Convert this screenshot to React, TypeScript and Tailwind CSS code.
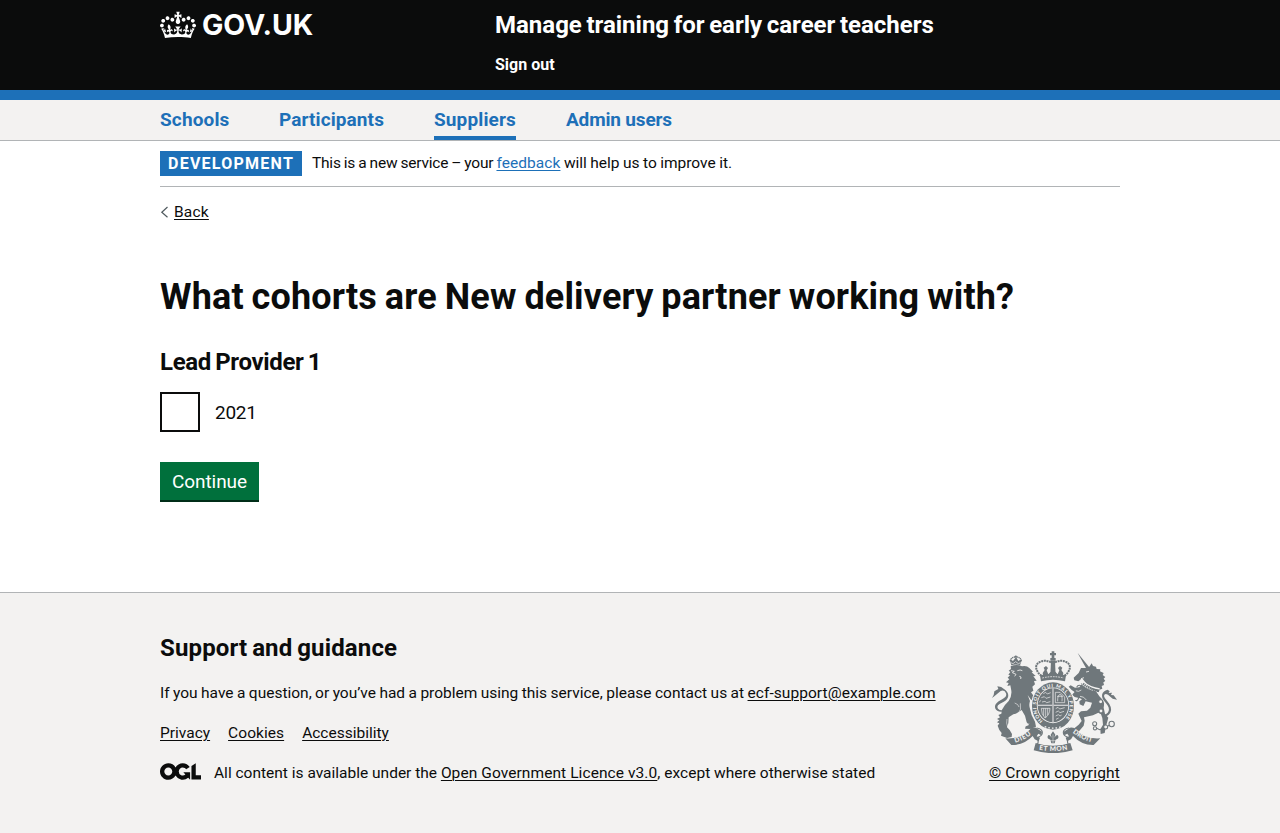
import type { ReactNode } from "react";

const link = "underline decoration-1 underline-offset-[2px]";

function Crown() {
  return (
    <svg className="h-[30px] w-[36px] shrink-0" viewBox="0 0 132 97" fill="currentColor" aria-hidden="true">
      <path
        fillRule="evenodd"
        d="M25 30.2c3.5 1.5 7.7-.2 9.1-3.7 1.5-3.6-.2-7.8-3.9-9.2-3.6-1.4-7.6.3-9.1 3.9-1.4 3.5.3 7.5 3.9 9zM9 39.5c3.6 1.5 7.8-.2 9.2-3.7 1.5-3.6-.2-7.8-3.9-9.1-3.6-1.5-7.6.2-9.1 3.8-1.4 3.5.3 7.5 3.8 9zM4.4 57.2c3.5 1.5 7.7-.2 9.1-3.8 1.5-3.6-.2-7.7-3.9-9.1-3.5-1.5-7.6.3-9.1 3.8-1.4 3.5.3 7.6 3.9 9.1zm38.3-21.4c3.5 1.5 7.7-.2 9.1-3.8 1.5-3.6-.2-7.7-3.9-9.1-3.6-1.5-7.6.3-9.1 3.8-1.3 3.6.4 7.7 3.9 9.1zm64.4-5.6c-3.6 1.5-7.8-.2-9.1-3.7-1.5-3.6.2-7.8 3.8-9.2 3.6-1.4 7.7.3 9.2 3.9 1.3 3.5-.4 7.5-3.9 9zm15.9 9.3c-3.6 1.5-7.7-.2-9.1-3.7-1.5-3.6.2-7.8 3.7-9.1 3.6-1.5 7.7.2 9.2 3.8 1.5 3.5-.3 7.5-3.8 9zm4.7 17.7c-3.6 1.5-7.8-.2-9.2-3.8-1.5-3.6.2-7.7 3.9-9.1 3.6-1.5 7.7.3 9.2 3.8 1.3 3.5-.4 7.6-3.9 9.1zM89.3 35.8c-3.6 1.5-7.8-.2-9.2-3.8-1.4-3.6.2-7.7 3.9-9.1 3.6-1.5 7.7.3 9.2 3.8 1.4 3.6-.3 7.7-3.9 9.1zM69.7 17.7l8.9 4.7V9.3l-8.9 2.8c-.2-.3-.5-.6-.9-.9L72.4 0H59.6l3.5 11.2c-.3.3-.6.5-.9.9l-8.8-2.8v13.1l8.8-4.7c.3.3.6.7.9.9l-5 15.4v.1c-.2.8-.4 1.6-.4 2.4 0 4.1 3.1 7.5 7 8.1h.2c.3 0 .7.1 1 .1.4 0 .7 0 1-.1h.2c4-.6 7.1-4.1 7.1-8.1 0-.8-.1-1.7-.4-2.4V34l-5.1-15.4c.4-.2.7-.6 1-.9zM66 92.8c16.9 0 32.8 1.1 47.1 3.2 4-16.9 8.9-26.7 14-33.5l-9.6-3.4c1 4.9 1.1 7.2 0 10.2-1.5-1.4-3-4.3-4.2-8.7L108.6 76c2.8-2 5-3.2 7.5-3.3-4.4 9.4-10 11.9-13.6 11.2-4.3-.8-6.3-4.6-5.6-7.9 1-4.7 5.7-5.9 8-.5 4.3-8.7-3-11.4-7.6-8.8 7.1-7.2 7.9-13.5 2.1-21.1-8 6.1-8.1 12.3-4.5 20.8-4.7-5.4-12.1-2.5-9.5 6.2 3.4-5.2 7.9-2 7.2 3.1-.6 4.3-6.4 7.8-13.5 7.2-10.3-.9-10.9-8-11.2-13.8 2.5-.5 7.1 1.8 11 7.3L80.2 60c-4.1 4.4-8 5.3-12.3 5.4 1.4-4.4 8-11.6 8-11.6H55.5s6.4 7.2 7.9 11.6c-4.2-.1-8-1-12.3-5.4l1.4 16.4c3.9-5.5 8.5-7.7 10.9-7.3-.3 5.8-.9 12.8-11.1 13.8-7.2.6-12.9-2.9-13.5-7.2-.7-5 3.8-8.3 7.1-3.1 2.7-8.7-4.6-11.6-9.4-6.2 3.7-8.5 3.6-14.7-4.6-20.8-5.8 7.6-5 13.9 2.2 21.1-4.7-2.6-11.9.1-7.7 8.8 2.3-5.5 7.1-4.2 8.1.5.7 3.3-1.3 7.1-5.7 7.9-3.5.7-9-1.8-13.5-11.2 2.5.1 4.7 1.3 7.5 3.3l-4.7-15.4c-1.2 4.4-2.7 7.2-4.3 8.7-1.1-3-.9-5.3 0-10.2l-9.5 3.4c5 6.9 9.9 16.7 14 33.5 14.8-2.1 30.8-3.2 47.7-3.2z"
      />
    </svg>
  );
}

function OglLogo() {
  return (
    <svg className="h-[17px] w-[41px] shrink-0" viewBox="0 0 483.2 195.7" fill="currentColor" aria-hidden="true">
      <path d="M421.5 142.8V.1l-50.7 32.3v161.1h112.4v-50.7zm-122.3-9.6A47.12 47.12 0 0 1 221 97.8c0-26 21.1-47.1 47.1-47.1 16.7 0 31.4 8.7 39.7 21.8l42.7-27.2A97.63 97.63 0 0 0 268.1 0c-36.5 0-68.3 20.1-85.1 49.7A98 98 0 0 0 97.8 0C43.9 0 0 43.9 0 97.8s43.9 97.8 97.8 97.8c36.5 0 68.3-20.1 85.1-49.7a97.76 97.76 0 0 0 149.6 25.4l19.4 22.2h3v-87.8h-80l24.3 27.5zM97.8 145c-26 0-47.1-21.1-47.1-47.1s21.1-47.1 47.1-47.1 47.1 21.1 47.1 47.1S123.8 145 97.8 145" />
    </svg>
  );
}

function Crest() {
  return (
    <svg
      className="h-[102px] w-[125px]"
      viewBox="36 33 375 306"
      fill="#6f777b"
      stroke="#6f777b"
      strokeWidth="0"
      aria-hidden="true"
      fontFamily="Lato, sans-serif"
    >
      <defs>
        <path id="garter" d="M192 245A50.5 56 0 1 1 246 245" />
        <path id="dieu" d="M106 308Q136 300 160 278" />
        <path id="etmon" d="M174 329Q219 338 266 328" />
        <path id="droit" d="M276 277Q305 300 341 308" />
      </defs>

      {/* Royal crown */}
      <path d="M215 34h8v5h5v7h-5v8h4v8h-16v-8h4v-8h-5v-7h5z" />
      <path d="M213 62h12l2 45h-16z" />
      <path
        d="M213 67C190 55 164 68 169 86Q172 98 184 107M225 67C248 55 274 68 269 86Q266 98 254 107"
        fill="none"
        strokeWidth="6"
        strokeDasharray="6 2"
      />
      <path d="M188 99l6-9-3-7 7-5 6 6-4 7 5 12 7-8 7 11 7-11 7 8 5-12-4-7 6-6 7 5-3 7 6 9-2 10h-58z" />
      <path d="M180 106q39-10 78 0l-3 18q-36-9-72 0z" />
      <path d="M187 114q32-8 64 0" fill="none" stroke="#f3f2f1" strokeWidth="2.5" strokeDasharray="5 3" />

      {/* Lion */}
      <path d="M90 62l3-3 6 4 7-9h4l5 9 6-4 4 3-5 14q-14-5-26 0z" />
      <path d="M92 68l7 3 8-6 8 6 7-3" stroke="#f3f2f1" strokeWidth="2" fill="none" />
      <path d="M91 63q2-12 15-12M124 63q-2-12-15-12" fill="none" strokeWidth="4" strokeDasharray="4 1.5" />
      <circle cx="107.500" cy="50" r="3.500" />
      <path d="M92 79q18-8 34 0 14-3 22 5l11 11-4 2 12 11-7 1 10 13-8 1 3 10-8 7 3 12-7 5 10 14q8-5 13 0l9 7-3 9 5 10-12-2-9-9-13-7-10-14 7 18q-4 13 0 23l5 20 10 19 3 15-17 7-16-1 2-7 10-4-7-8-5-20-10-17q-13 10-25 13l-14 9-1 17-4 13 8 8 7 12-1 9-14 3-18-7 2-8-7-9-5-13 5-7-7-3 7-6-7-4 9-5-5-7 9-4 2-12q7-14 20-26 10-15 8-31l-3-16-9 2 4-9-8-2 10-9-5-5 7-7-5-2 6-8-5-4 7-5z" />
      <path d="M93 92l10 2-6 4 11 5-4 6M112 92q9-4 15 0M118 109l5 2-1 6" fill="none" stroke="#f3f2f1" strokeWidth="2.5" />
      <path d="M121 190q5 18-8 34M104 189q11 3 13 12M81 237q-3 12 2 24M147 250l-9 9" fill="none" stroke="#f3f2f1" strokeWidth="1.8" />
      <path d="M75 213C48 222 37 199 51 188 64 177 83 174 78 160Q74 148 62 153L43 169 36 174Q43 164 43 154L55 147 52 139Q65 139 72 147C90 159 89 177 70 186Q46 196 54 206 64 216 77 206z" />

      {/* Unicorn */}
      <path d="M293 39l36 44-9 5z" />
      <path d="M324 84l5-5 6-9 4 8 9 2 2 7 11 1-1 6 11 5-3 6 8 6-5 5 5 7-6 4 2 8-7 3 2 8-8 3-3 8q-16-5-33-18l-7-12-6-8q-5-7-9 0l-6 5-12-3-2-8 15-14 7-15z" />
      <path d="M318 96l9-2M303 116l9-3" stroke="#f3f2f1" strokeWidth="2.5" />
      <path d="M312 127q18 16 47 20" fill="none" stroke="#f3f2f1" strokeWidth="4" />
      <path d="M309 131q20 18 48 22" fill="none" strokeWidth="7" strokeDasharray="4 2" />
      <path d="M307 130l-9 12-13 1-13-7-6 4 9 10 9 6-8 8 8 7 16 4 6 3-8 6 1 9 11 5 7-14 19 4-5 15-10 9-18 2-8 7 10 22-9 11-12 10-5 12 18-2 14-17 3-15-2-10 27-6 16-8 8 5 4 11 2 20-8 14 1 14 12-3 4-20 7-26-10-12-4-18q4-18-6-27l-7-7-10-15q-24-3-46-23z" />
      <path d="M286 152q10 5 18-2M300 169q12 0 19 11" fill="none" stroke="#f3f2f1" strokeWidth="2.200" />
      <g fill="none" strokeWidth="3.2">
        <path d="M286 148q-3 8 4 14 9 6 5 14t-9 5M303 137q-9-4-13 5" />
        <circle cx="362" cy="185" r="6" fill="#f3f2f1" />
        <circle cx="363" cy="213" r="6" fill="#f3f2f1" />
        <circle cx="344" cy="251" r="6" fill="#f3f2f1" />
        <circle cx="345" cy="265" r="5" fill="#f3f2f1" />
        <circle cx="377" cy="261" r="6" fill="#f3f2f1" />
        <circle cx="395" cy="252" r="8" fill="#f3f2f1" />
        <path d="M350 265l9 4 13-5M384 258l4-2" />
      </g>
      <path d="M371 226C394 217 389 201 375 186 360 169 365 153 383 149L389 154 386 159 396 158 393 165 401 166 411 179 398 176 384 164Q373 158 372 168 373 175 382 184 399 204 391 218 382 231 369 231z" />

      {/* Garter and shield */}
      <ellipse cx="219" cy="198" rx="66" ry="74" fill="#f3f2f1" />
      <ellipse cx="219" cy="198" rx="63" ry="71" />
      <ellipse cx="219" cy="196" rx="48.5" ry="53.5" fill="#f3f2f1" />
      <ellipse cx="219" cy="196" rx="46" ry="51" />
      <path d="M219 145v102M173 196h92" stroke="#f3f2f1" strokeWidth="3.500" />
      <path d="M219 145v102M173 196h92" strokeWidth="1" />
      <g fill="none" stroke="#f3f2f1" strokeWidth="2">
        <path d="M190 161l7-4 5 5 10-4M184 173l9-3 5 5 13-4M186 186l9-2 5 4 11-3M178 187l4-6" />
        <path d="M226 157h14l14 14v17h-28zM233 184q-1-18 7-21 8 3 6 21M231 169l18 0" />
        <path d="M184 205h26q-1 20-15 29-11-11-11-29M191 205v22M197 205v27M203 205v20" />
        <path d="M227 206l7-4 5 5 15-4M227 217l8-4 5 5 12-4M227 228l8-4 5 4 5-3M228 238l8-4" />
      </g>
      <g fill="#f3f2f1" fontSize="14.5" fontWeight="900">
        <text>
          <textPath href="#garter" startOffset="4" textLength="258" lengthAdjust="spacing">
            HONI SOIT QUI MAL Y PENSE
          </textPath>
        </text>
      </g>
      <path d="M194 260q25 9 50 0" fill="none" stroke="#f3f2f1" strokeWidth="4" strokeDasharray="5 6" />

      {/* Ribbon */}
      <path d="M76 295q48 4 78-31 12-4 19 3l13 8-2 11-9-5-5 8 10 4-4 11-12-6-6-10q-26 28-64 27z" />
      <path d="M361 295q-48 4-78-31-12-4-19 3l-13 8 2 11 9-5 5 8-10 4 4 11 12-6 6-10q26 28 62 27z" />
      <path d="M170 264q18 3 17 15-1 8-13 13 2 20-3 20M267 264q-18 3-17 15 1 8 13 13-2 20 3 20" fill="none" strokeWidth="3.5" />
      <path d="M167 309q52 17 104 0l7 22q-58 17-117 0z" />
      <path d="M219 274l7 10-3 9q8-13 12-4 2 8-8 10l-3 11h-10l-3-11q-10-2-8-10 4-9 12 4l-3-9z" />
      <path d="M219 283v26M208 302h22" stroke="#f3f2f1" strokeWidth="1.500" />
      <g fill="#f3f2f1" fontSize="20" fontWeight="900">
        <text><textPath href="#dieu" textLength="54">DIEU</textPath></text>
        <text><textPath href="#etmon" startOffset="3" textLength="86">ET MON</textPath></text>
        <text><textPath href="#droit" startOffset="2" textLength="64">DROIT</textPath></text>
      </g>
    </svg>
  );
}

function Container({ className = "", children }: { className?: string; children: ReactNode }) {
  return <div className={`mx-auto w-[960px] ${className}`}>{children}</div>;
}

const navItems = [
  { label: "Schools", style: "w-[69px] tracking-[0.14px] border-transparent" },
  { label: "Participants", style: "w-[105px] tracking-[0.1px] border-transparent" },
  { label: "Suppliers", style: "w-[82px] tracking-[0.13px] border-[#1d70b8]" },
  { label: "Admin users", style: "w-[106px] tracking-[-0.16px] border-transparent" },
];

export default function App() {
  return (
    <div className="flex min-h-screen flex-col bg-white font-['Roboto',sans-serif] text-[15.5px] leading-5 text-[#0b0c0c]">
      <header className="h-[100px] border-b-[10px] border-[#1d70b8] bg-[#0b0c0c] text-white">
        <Container className="flex">
          <a href="#" className="flex w-[335px] items-start gap-[6px] pt-[10px]">
            <Crown />
            <span className="font-['Inter'] text-[28.5px] leading-[30px] font-bold tracking-[-0.05px]">GOV.UK</span>
          </a>
          <div className="pt-[10px]">
            <div className="text-[24px] leading-[30px] font-bold [word-spacing:-1.4px]">
              Manage training for early career teachers
            </div>
            <a href="#" className="mt-[15px] block text-[16px] leading-5 font-bold">
              Sign out
            </a>
          </div>
        </Container>
      </header>

      <nav className="h-[41px] border-b border-[#b1b4b6] bg-[#f3f2f1]">
        <Container className="flex gap-[50px]">
          {navItems.map((item) => (
            <a
              key={item.label}
              href="#"
              className={`h-10 border-b-4 text-[19px] leading-10 font-bold whitespace-nowrap text-[#1d70b8] ${item.style}`}
            >
              {item.label}
            </a>
          ))}
        </Container>
      </nav>

      <Container>
        <div className="flex h-[46px] items-start border-b border-[#b1b4b6] pt-[10px]">
          <strong className="h-[25px] w-[142px] bg-[#1d70b8] pl-2 text-[16px] leading-[25px] font-bold tracking-[1.25px] text-white">
            DEVELOPMENT
          </strong>
          <p className="ml-[10px] leading-[25px] whitespace-pre">
            <span className="tracking-[-0.22px] [word-spacing:-0.5px]">This is a new service – your </span>
            <a href="#" className={`tracking-[0.06px] text-[#1d70b8] ${link}`}>feedback</a>
            <span className="[word-spacing:-0.4px]"> will help us to improve it.</span>
          </p>
        </div>
        <a href="#" className="mt-[15px] flex h-5 items-center">
          <svg className="mr-[5px] h-3 w-[9px]" viewBox="0 0 9 12" fill="none" stroke="#505a5f" strokeWidth="1.2">
            <path d="M7.5 1L1.8 6.2l5.7 5" />
          </svg>
          <span className={`tracking-[0.2px] ${link}`}>Back</span>
        </a>
      </Container>

      <Container className="pt-[55px]">
        <h1 className="text-[36px] leading-[41px] font-bold tracking-[0.15px] [word-spacing:-1.2px]">
          What cohorts are New delivery partner working with?
        </h1>
        <h2 className="mt-[29px] text-[24px] leading-[30px] font-bold tracking-[-0.35px] [word-spacing:-1.3px]">
          Lead Provider 1
        </h2>
        <label className="mt-[15px] flex h-10 items-center">
          <input type="checkbox" className="h-10 w-10 appearance-none border-2 border-[#0b0c0c] bg-white" />
          <span className="ml-[15px] text-[19px] leading-[25px] tracking-[-0.3px]">2021</span>
        </label>
        <button className="mt-[30px] block h-10 w-[99px] border-b-2 border-[#002d18] bg-[#00703c] pt-px text-[19px] leading-[37px] tracking-[-0.08px] text-white">
          Continue
        </button>
      </Container>

      <footer className="mt-[90px] flex-1 border-t border-[#b1b4b6] bg-[#f3f2f1]">
        <Container className="flex justify-between pt-10">
          <div>
            <h2 className="text-[24px] leading-[30px] font-bold tracking-[0.15px] [word-spacing:-1.3px]">
              Support and guidance
            </h2>
            <p className="mt-5 whitespace-pre">
              <span className="[word-spacing:-0.42px]">
                If you have a question, or you’ve had a problem using this service, please contact us at{" "}
              </span>
              <a href="#" className={`tracking-[0.06px] ${link}`}>ecf-support@example.com</a>
            </p>
            <div className="mt-5 flex gap-[18px]">
              <a href="#" className={link}>Privacy</a>
              <a href="#" className={`tracking-[0.06px] ${link}`}>Cookies</a>
              <a href="#" className={link}>Accessibility</a>
            </div>
            <div className="mt-5 flex">
              <OglLogo />
              <p className="ml-[13px] whitespace-pre">
                <span>All content is available under the </span>
                <a href="#" className={`tracking-[0.08px] ${link}`}>Open Government Licence v3.0</a>
                <span className="tracking-[0.02px]">, except where otherwise stated</span>
              </p>
            </div>
          </div>
          <a href="#" className="flex w-[131px] flex-col items-center pt-[18px] whitespace-nowrap">
            <Crest />
            <span className={`mt-[10px] tracking-[0.15px] ${link}`}>© Crown copyright</span>
          </a>
        </Container>
      </footer>
    </div>
  );
}
